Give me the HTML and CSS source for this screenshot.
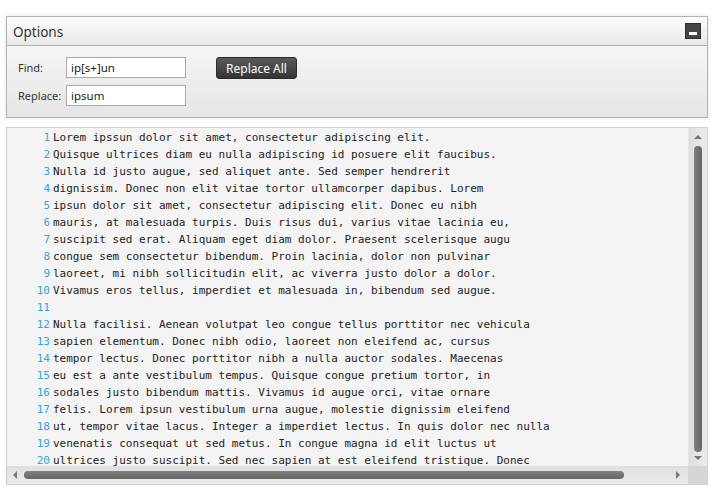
FILE: index.html
```html
<!DOCTYPE html>
<html>
<head>
<meta charset="utf-8">
<link rel="stylesheet" href="styles.css">
</head>
<body>
<div class="panel">
  <div class="panel-head">
    <span class="panel-title">Options</span>
    <button class="min-btn" aria-label="Minimize"><span class="min-bar"></span></button>
  </div>
  <div class="panel-body">
    <div class="fields">
      <div class="row"><label class="lbl">Find:</label><input class="inp" value="ip[s+]un"></div>
      <div class="row"><label class="lbl">Replace:</label><input class="inp" value="ipsum"></div>
    </div>
    <button class="btn">Replace All</button>
  </div>
</div>
<div class="editor">
  <div class="code">
    <div class="ln"><span class="num">1</span><span class="txt">Lorem ipssun dolor sit amet, consectetur adipiscing elit.</span></div>
    <div class="ln"><span class="num">2</span><span class="txt">Quisque ultrices diam eu nulla adipiscing id posuere elit faucibus.</span></div>
    <div class="ln"><span class="num">3</span><span class="txt">Nulla id justo augue, sed aliquet ante. Sed semper hendrerit</span></div>
    <div class="ln"><span class="num">4</span><span class="txt">dignissim. Donec non elit vitae tortor ullamcorper dapibus. Lorem</span></div>
    <div class="ln"><span class="num">5</span><span class="txt">ipsun dolor sit amet, consectetur adipiscing elit. Donec eu nibh</span></div>
    <div class="ln"><span class="num">6</span><span class="txt">mauris, at malesuada turpis. Duis risus dui, varius vitae lacinia eu,</span></div>
    <div class="ln"><span class="num">7</span><span class="txt">suscipit sed erat. Aliquam eget diam dolor. Praesent scelerisque augu</span></div>
    <div class="ln"><span class="num">8</span><span class="txt">congue sem consectetur bibendum. Proin lacinia, dolor non pulvinar</span></div>
    <div class="ln"><span class="num">9</span><span class="txt">laoreet, mi nibh sollicitudin elit, ac viverra justo dolor a dolor.</span></div>
    <div class="ln"><span class="num">10</span><span class="txt">Vivamus eros tellus, imperdiet et malesuada in, bibendum sed augue.</span></div>
    <div class="ln"><span class="num">11</span><span class="txt"></span></div>
    <div class="ln"><span class="num">12</span><span class="txt">Nulla facilisi. Aenean volutpat leo congue tellus porttitor nec vehicula</span></div>
    <div class="ln"><span class="num">13</span><span class="txt">sapien elementum. Donec nibh odio, laoreet non eleifend ac, cursus</span></div>
    <div class="ln"><span class="num">14</span><span class="txt">tempor lectus. Donec porttitor nibh a nulla auctor sodales. Maecenas</span></div>
    <div class="ln"><span class="num">15</span><span class="txt">eu est a ante vestibulum tempus. Quisque congue pretium tortor, in</span></div>
    <div class="ln"><span class="num">16</span><span class="txt">sodales justo bibendum mattis. Vivamus id augue orci, vitae ornare</span></div>
    <div class="ln"><span class="num">17</span><span class="txt">felis. Lorem ipsun vestibulum urna augue, molestie dignissim eleifend</span></div>
    <div class="ln"><span class="num">18</span><span class="txt">ut, tempor vitae lacus. Integer a imperdiet lectus. In quis dolor nec nulla</span></div>
    <div class="ln"><span class="num">19</span><span class="txt">venenatis consequat ut sed metus. In congue magna id elit luctus ut</span></div>
    <div class="ln"><span class="num">20</span><span class="txt">ultrices justo suscipit. Sed nec sapien at est eleifend tristique. Donec</span></div>
  </div>
  <div class="vscroll">
    <span class="arr arr-up"></span>
    <span class="vthumb"></span>
    <span class="arr arr-down"></span>
  </div>
  <div class="hscroll">
    <span class="arr arr-left"></span>
    <span class="hthumb"></span>
    <span class="arr arr-right"></span>
  </div>
  <div class="corner"></div>
</div>
</body>
</html>
```
FILE: styles.css
```css
html, body { margin: 0; background: #fff; }
body {
  padding: 16px 7px 0 6px;
  font-family: "Noto Sans", "Open Sans", sans-serif;
  color: #222;
}
.panel {
  border: 1px solid #b3b3b3;
  box-shadow: 0 0 4px rgba(0,0,0,0.12);
  background: #eee;
}
.panel-head {
  height: 28px;
  border-bottom: 1px solid #b4b4b4;
  background: linear-gradient(#fdfdfd, #e9e9e9);
  display: flex;
  align-items: center;
  justify-content: space-between;
  padding: 0 6px 0 6px;
}
.panel-title { font-size: 13.5px; color: #333; position: relative; top: 1px; }
.min-btn {
  width: 16px; height: 16px;
  padding: 0; margin: 0;
  background: #454545;
  border: 1px solid #2e2e2e;
  display: flex; align-items: flex-end; justify-content: center;
}
.min-bar {
  width: 8px; height: 3px; background: #fff; margin-bottom: 3px;
}
.panel-body {
  height: 50px;
  padding: 11px 11px 10px 11px;
  background: linear-gradient(#f6f6f6, #e5e5e5);
  display: flex;
  align-items: flex-start;
  gap: 30px;
}
.fields { display: flex; flex-direction: column; gap: 7px; }
.row { display: flex; align-items: center; }
.lbl { width: 48px; font-size: 11px; color: #333; }
.inp {
  width: 111px; height: 15px;
  padding: 2px 3px 2px 4px;
  margin: 0;
  border: 1px solid #aaa;
  background: #fff;
  font-family: "Noto Sans", sans-serif;
  font-size: 11.5px;
  color: #222;
  outline: none;
}
.btn {
  width: 81px; height: 22px;
  margin: 0; padding: 0;
  border: 1px solid #2a2a2a;
  border-radius: 3px;
  background: linear-gradient(#5a5a5a, #353535);
  color: #fff;
  font-family: "Noto Sans", sans-serif;
  font-size: 12px;
}
.editor {
  margin-top: 9px;
  height: 356px;
  border: 1px solid #d0d0d0;
  background: #f4f4f4;
  display: grid;
  grid-template-columns: 1fr 19px;
  grid-template-rows: 1fr 18px;
  overflow: hidden;
}
.code {
  overflow: hidden;
  padding-top: 1px;
  font-family: "DejaVu Sans Mono", monospace;
  font-size: 11px;
}
.ln { display: flex; height: 17px; line-height: 17px; white-space: pre; }
.num { width: 43px; text-align: right; color: #2fa4e7; padding-right: 3px; flex: none; }
.txt { color: #222; }
.vscroll {
  background: linear-gradient(90deg, #dedede, #ececec);
  border-left: 1px solid #e6e6e6;
  display: flex; flex-direction: column; align-items: center;
  padding: 7px 0 6px;
}
.vthumb {
  width: 8px; flex: 1;
  margin: 7px 0 4px;
  background: linear-gradient(90deg, #808080, #666);
  border-radius: 4px;
}
.hscroll {
  background: linear-gradient(#dedede, #ececec);
  display: flex; align-items: center;
  padding: 0 8px 0 6px;
}
.hthumb {
  height: 8px;
  width: 600px;
  margin: 0 auto 0 7px;
  background: linear-gradient(#808080, #666);
  border-radius: 4px;
}
.corner { background: #d6d6d6; }
.arr { width: 0; height: 0; display: block; flex: none; }
.arr-up { border-left: 4px solid transparent; border-right: 4px solid transparent; border-bottom: 4px solid #777; }
.arr-down { border-left: 4px solid transparent; border-right: 4px solid transparent; border-top: 4px solid #777; }
.arr-left { border-top: 4px solid transparent; border-bottom: 4px solid transparent; border-right: 4px solid #777; }
.arr-right { border-top: 4px solid transparent; border-bottom: 4px solid transparent; border-left: 4px solid #777; }
```
